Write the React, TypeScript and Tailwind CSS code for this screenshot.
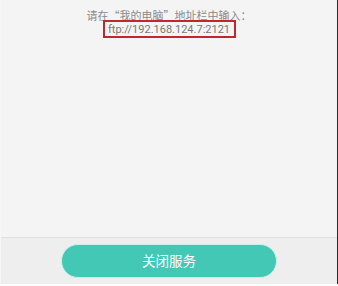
import React from "react";

export default function App() {
  return (
    <div className="w-[338px] h-[286px] bg-white flex flex-col">
      <div className="flex h-[284px]">
        <div className="w-[1px] bg-[#f7f7f7]" />
        <div className="flex-1 flex flex-col">
          <div className="h-[237px] bg-[#f4f4f4] flex flex-col items-center pt-[8px]">
            <div
              className="text-[11px] leading-[14px] text-[#8a8a8a]"
              style={{ fontFamily: '"Noto Sans CJK SC", "Noto Sans", sans-serif' }}
            >
              请在“我的电脑”地址栏中输入：
            </div>
            <div
              className="mt-[-2px] h-[18px] w-[133px] border-2 border-[#c0282d] flex items-center justify-center text-[11px] leading-none text-[#7a7a7a]"
              style={{ fontFamily: 'Roboto, "Liberation Sans", sans-serif' }}
            >
              ftp://192.168.124.7:2121
            </div>
          </div>
          <div className="h-[1px] bg-[#e0e0e0]" />
          <div className="flex-1 bg-[#eeeeee] flex items-center justify-center pb-[1px]">
            <div className="w-[216px] h-[34px] rounded-full bg-[#44c8b6] border border-[#c6efe7] flex items-center justify-center">
              <span
                className="text-[13.5px] text-white"
                style={{ fontFamily: '"Noto Sans CJK SC", "Noto Sans", sans-serif' }}
              >
                关闭服务
              </span>
            </div>
          </div>
        </div>
        <div className="w-[1px] bg-[#2a2a2a]" />
      </div>
    </div>
  );
}
